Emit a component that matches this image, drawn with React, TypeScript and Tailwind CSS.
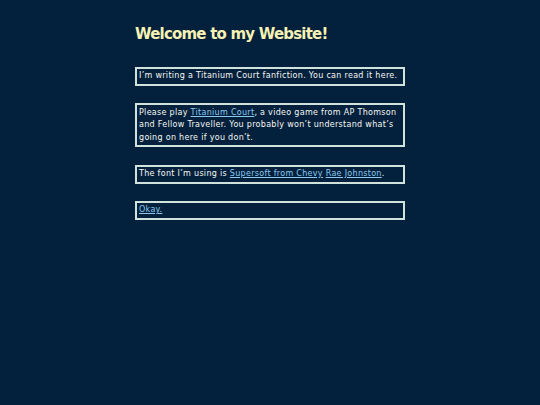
export default function App() {
  const link = 'text-[#8cc8f0] underline underline-offset-1'
  const box = 'border-2 border-[#cfe2dc] px-[2px] py-[1.25px] text-[8px] leading-[12.5px] tracking-[0.3px]'
  return (
    <div className="min-h-[405px] w-full bg-[#03203c] font-['DejaVu_Sans',sans-serif] text-[#f8f8f2]">
      <main className="mx-auto w-[270px] pt-[24px]">
        <h1 className="text-[15px] font-bold leading-[21px] tracking-[-0.8px] text-[#f6f2b4]">
          Welcome to my Website!
        </h1>
        <div className="mt-[22px] flex flex-col gap-[17.3px]">
          <p className={box}>
            I’m writing a Titanium Court fanfiction. You can read it here.
          </p>
          <p className={box}>
            Please play <a className={link}>Titanium Court</a>, a video game from AP Thomson and
            Fellow Traveller. You probably won’t understand what’s going on here if you don’t.
          </p>
          <p className={box}>
            The font I’m using is <a className={link}>Supersoft from Chevy</a>{' '}
            <a className={link}>Rae Johnston</a>.
          </p>
          <p className={box}>
            <a className={link}>Okay.</a>
          </p>
        </div>
      </main>
    </div>
  )
}
